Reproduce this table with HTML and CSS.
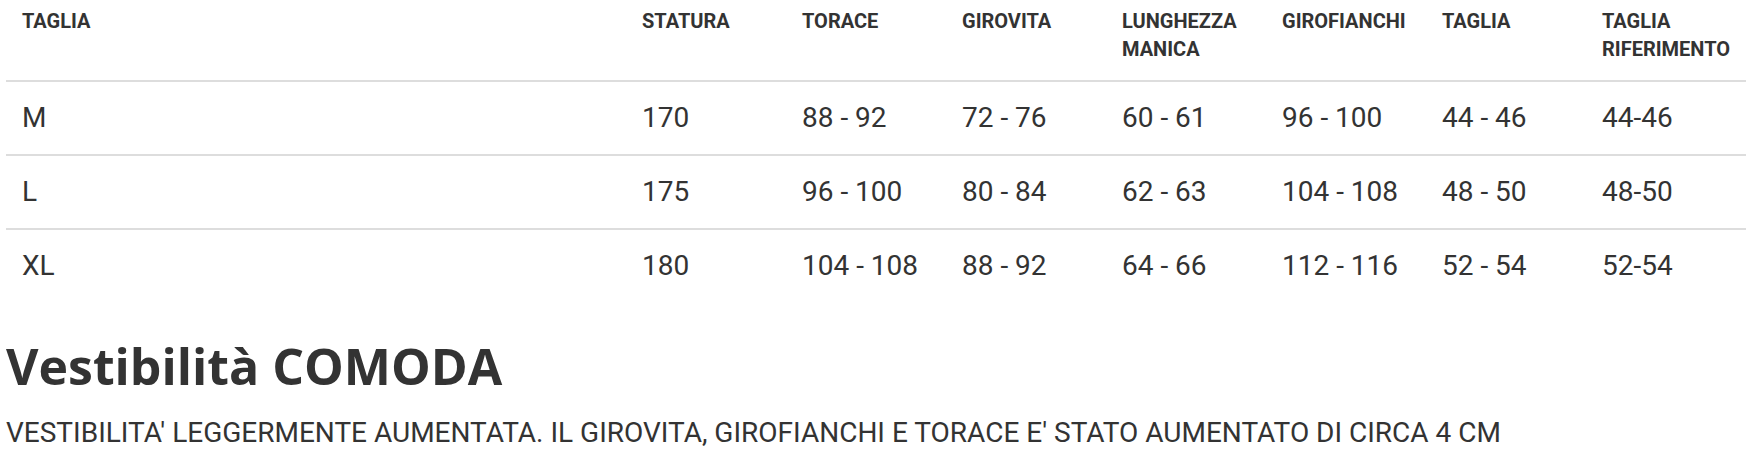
FILE: index.html
```html
<!DOCTYPE html>
<html lang="it">
<head>
<meta charset="utf-8">
<title>Tabella taglie</title>
<link rel="stylesheet" href="styles.css">
</head>
<body>
<div class="page">
  <table class="sizes">
    <colgroup>
      <col class="col-first">
      <col class="col">
      <col class="col">
      <col class="col">
      <col class="col">
      <col class="col">
      <col class="col">
      <col class="col">
    </colgroup>
    <thead>
      <tr>
        <th>TAGLIA</th>
        <th>STATURA</th>
        <th>TORACE</th>
        <th>GIROVITA</th>
        <th>LUNGHEZZA MANICA</th>
        <th>GIROFIANCHI</th>
        <th>TAGLIA</th>
        <th>TAGLIA RIFERIMENTO</th>
      </tr>
    </thead>
    <tbody>
      <tr>
        <td>M</td><td>170</td><td>88 - 92</td><td>72 - 76</td><td>60 - 61</td><td>96 - 100</td><td>44 - 46</td><td>44-46</td>
      </tr>
      <tr>
        <td>L</td><td>175</td><td>96 - 100</td><td>80 - 84</td><td>62 - 63</td><td>104 - 108</td><td>48 - 50</td><td>48-50</td>
      </tr>
      <tr>
        <td>XL</td><td>180</td><td>104 - 108</td><td>88 - 92</td><td>64 - 66</td><td>112 - 116</td><td>52 - 54</td><td>52-54</td>
      </tr>
    </tbody>
  </table>
  <h2 class="fit-title">Vestibilità COMODA</h2>
  <p class="fit-text">VESTIBILITA' LEGGERMENTE AUMENTATA. IL GIROVITA, GIROFIANCHI E TORACE E' STATO AUMENTATO DI CIRCA 4 CM</p>
</div>
</body>
</html>
```

FILE: styles.css
```css
html, body {
  margin: 0;
  padding: 0;
  background: #ffffff;
}

body {
  font-family: Roboto, "Liberation Sans", sans-serif;
  color: #333333;
}

.page {
  padding: 0 4px 0 6px;
}

.sizes {
  width: 1740px;
  border-collapse: collapse;
  table-layout: fixed;
}

.sizes .col-first {
  width: 620px;
}

.sizes .col {
  width: 160px;
}

.sizes th,
.sizes td {
  box-sizing: border-box;
}

.sizes th {
  text-align: left;
  vertical-align: top;
  font-size: 20px;
  line-height: 28px;
  font-weight: 700;
  color: #333333;
  padding: 7px 16px 17px 16px;
  border-bottom: 2px solid #dddddd;
}

.sizes td {
  font-size: 28px;
  line-height: 40px;
  padding: 16px 16px;
  color: #333333;
  border-bottom: 2px solid #dddddd;
}

.sizes tbody tr:last-child td {
  border-bottom: none;
}

.fit-title {
  font-family: "Open Sans", sans-serif;
  font-weight: 700;
  font-size: 50px;
  line-height: 60px;
  margin: 34px 0 0 0;
  color: #333333;
}

.fit-text {
  font-size: 28px;
  line-height: 36px;
  margin: 19px 0 0 0;
  color: #333333;
}
```
